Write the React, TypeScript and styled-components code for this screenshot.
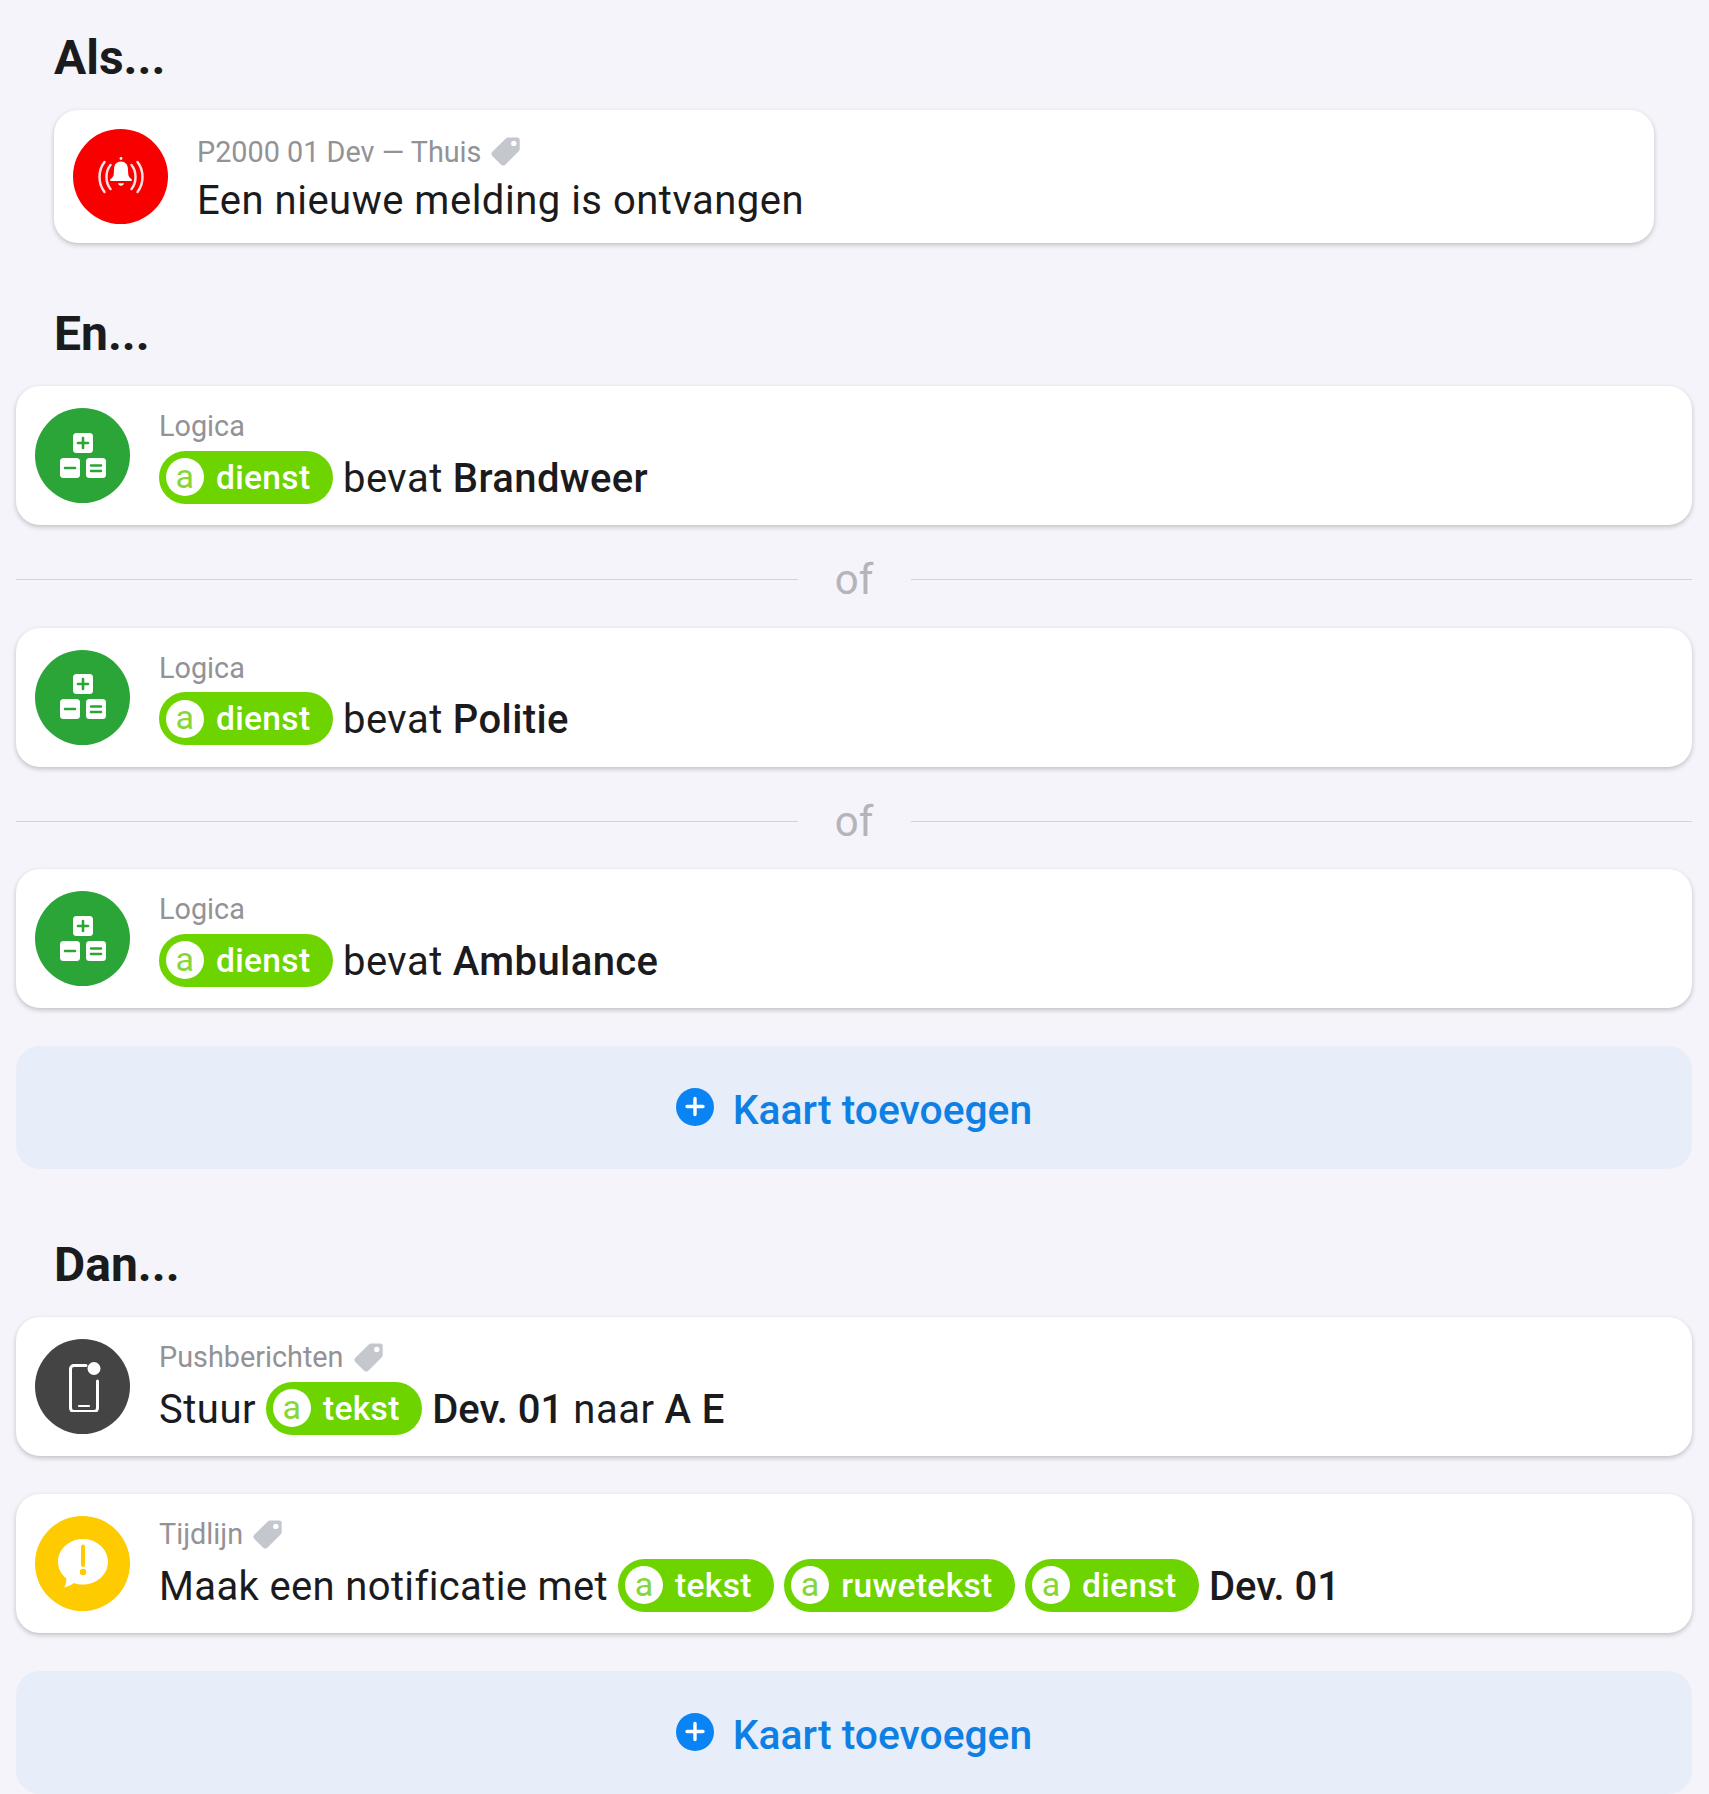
import React from 'react';
import styled, { createGlobalStyle } from 'styled-components';

const GlobalStyle = createGlobalStyle`
  html, body {
    margin: 0;
    padding: 0;
    background: #f4f4fa;
    font-family: Roboto, "Liberation Sans", sans-serif;
    color: #1b1b1d;
  }
  * { box-sizing: border-box; }
`;

const AlarmIcon = () => (
  <svg width="46" height="40" viewBox="0 0 46 40" fill="none">
    <circle cx="23" cy="1.500" r="1.400" fill="#fff" />
    <path d="M23 4.500c-4.300 0-6.700 3.100-6.900 7l-.4 6c-.1 1.900-1.500 3.200-3.300 4.800-.8.700-.3 1.800.7 1.800h19.800c1 0 1.500-1.100.7-1.800-1.800-1.600-3.200-2.900-3.300-4.800l-.4-6c-.2-3.900-2.600-7-6.900-7z" fill="#fff" />
    <path d="M20 26.300h6c-.3 1.500-1.500 2.400-3 2.400s-2.700-.9-3-2.400z" fill="#fff" />
    <path d="M12.500 8c-2.700 3.200-4 7-4 12s1.300 8.800 4 12M6.500 5C3.200 9.300 1.500 14.200 1.500 20s1.700 10.700 5 15" stroke="#fff" strokeWidth="2.500" strokeLinecap="round" opacity="0.88" />
    <path d="M33.500 8c2.700 3.200 4 7 4 12s-1.300 8.800-4 12M39.500 5c3.300 4.300 5 9.200 5 15s-1.700 10.700-5 15" stroke="#fff" strokeWidth="2.500" strokeLinecap="round" opacity="0.88" />
  </svg>
);

const KeysIcon = () => (
  <svg width="46" height="46" viewBox="0 0 46 46">
    <rect x="13" y="0" width="20" height="20" rx="3.500" fill="#fff" />
    <rect x="0" y="25" width="20" height="20" rx="3.500" fill="#fff" />
    <rect x="26" y="25" width="20" height="20" rx="3.500" fill="#fff" />
    <path d="M23 5v10M18 10h10M5 35h10M31 32.500h10M31 38h10" stroke="#2ba537" strokeWidth="2.600" strokeLinecap="round" fill="none" />
  </svg>
);

const PhoneIcon = () => (
  <svg width="36" height="50" viewBox="-4 0 36 50" fill="none">
    <path d="M17 3.500H5C3 3.500 1.500 5 1.500 7v39c0 2 1.500 3.500 3.500 3.500h20c2 0 3.500-1.500 3.500-3.500V19" stroke="#fff" strokeWidth="3" strokeLinecap="round" />
    <path d="M10 44h10" stroke="#fff" strokeWidth="2.200" strokeLinecap="round" />
    <circle cx="25" cy="6.500" r="6.500" fill="#fff" />
  </svg>
);

const BubbleIcon = () => (
  <svg width="50" height="50" viewBox="0 0 50 50">
    <path d="M25 0c13.800 0 25 10.200 25 22.800S38.800 45.600 25 45.600c-3.200 0-6.300-.5-9.100-1.500-2.700 2-6.700 3.900-9.700 4.400 1.400-2.400 2.300-5.700 2.100-9C3.200 35.400 0 29.500 0 22.800 0 10.200 11.200 0 25 0z" fill="#fff" />
    <path d="M25 7.500v18.500" stroke="#fecb00" strokeWidth="4" strokeLinecap="round" />
    <circle cx="25" cy="33" r="3.200" fill="#fecb00" />
  </svg>
);

const TagIcon = () => (
  <svg width="31" height="31" viewBox="0 0 31 31">
    <path d="M18 1.500h9.500c1.200 0 2.200 1 2.200 2.200V13c0 .8-.3 1.600-.9 2.200L15.300 28.700c-1.200 1.200-3 1.200-4.200 0L2.300 19.900c-1.200-1.200-1.200-3 0-4.200L15.800 2.400c.6-.6 1.400-.9 2.200-.9zm5.800 3.200a2.700 2.700 0 1 0 0 5.400 2.700 2.700 0 0 0 0-5.400z" fill="#c5c7cf" fillRule="evenodd" />
  </svg>
);

const PlusIcon = () => (
  <svg width="38" height="38" viewBox="0 0 38 38">
    <circle cx="19" cy="19" r="19" fill="#0a84f5" />
    <path d="M19 10.500v16M11 18.500h16" stroke="#fff" strokeWidth="3.400" strokeLinecap="round" />
  </svg>
);

const Chip: React.FC<{ name: string }> = ({ name }) => (
  <Pill>
    <PillBadge>a</PillBadge>
    {name}
  </Pill>
);

const Meta: React.FC<{ label: string; tagged?: boolean }> = ({ label, tagged }) => (
  <MetaRow>
    {label}
    {tagged && <TagIcon />}
  </MetaRow>
);

const AddCard = () => (
  <AddButton>
    <AddIcon><PlusIcon /></AddIcon>
    <AddLabel>Kaart toevoegen</AddLabel>
  </AddButton>
);

const Or = () => (
  <Separator>
    <SeparatorLine />
    <SeparatorText>of</SeparatorText>
    <SeparatorLine />
  </Separator>
);

const logic = ['Brandweer', 'Politie', 'Ambulance'];

const App: React.FC = () => (
  <Page>
    <GlobalStyle />
    <Heading>Als...</Heading>
    <TriggerWrap>
      <Card $height={133}>
        <IconCircle $color="#f80000"><AlarmIcon /></IconCircle>
        <CardBody $trigger>
          <Meta label="P2000 01 Dev — Thuis" tagged />
          <TextRow>Een nieuwe melding is ontvangen</TextRow>
        </CardBody>
      </Card>
    </TriggerWrap>

    <Heading $top={64}>En...</Heading>
    {logic.map((word, index) => (
      <React.Fragment key={word}>
        {index > 0 && <Or />}
        <Card>
          <IconCircle $color="#2ba537"><KeysIcon /></IconCircle>
          <CardBody>
            <Meta label="Logica" />
            <TextRow>
              <Chip name="dienst" />
              <Word>bevat</Word>
              <Strong>{word}</Strong>
            </TextRow>
          </CardBody>
        </Card>
      </React.Fragment>
    ))}
    <CardGap />
    <AddCard />

    <Heading $top={69}>Dan...</Heading>
    <Card>
      <IconCircle $color="#444444"><PhoneIcon /></IconCircle>
      <CardBody>
        <Meta label="Pushberichten" tagged />
        <TextRow>
          <Word>Stuur</Word>
          <Chip name="tekst" />
          <Strong $tight>Dev. 01</Strong>
          <Word>naar</Word>
          <Strong>A E</Strong>
        </TextRow>
      </CardBody>
    </Card>
    <CardGap />
    <Card>
      <IconCircle $color="#fecb00"><BubbleIcon /></IconCircle>
      <CardBody>
        <Meta label="Tijdlijn" tagged />
        <TextRow>
          <Word $tight>Maak een notificatie met</Word>
          <Chip name="tekst" />
          <Chip name="ruwetekst" />
          <Chip name="dienst" />
          <Strong $tight>Dev. 01</Strong>
        </TextRow>
      </CardBody>
    </Card>
    <CardGap />
    <AddCard />
  </Page>
);

const Page = styled.div`
  width: 1709px;
  height: 1794px;
  overflow: hidden;
  padding: 0 17px 0 16px;
`;

const Heading = styled.h2<{ $top?: number }>`
  margin: ${(p) => p.$top ?? 31}px 0 25px 38px;
  height: 54px;
  line-height: 54px;
  font-size: 48px;
  font-weight: 700;
  color: #1b1b1d;
`;

const TriggerWrap = styled.div`
  padding: 0 38px;
`;

const Card = styled.div<{ $height?: number }>`
  display: flex;
  align-items: center;
  height: ${(p) => p.$height ?? 139}px;
  padding-left: 19px;
  gap: 29px;
  background: #fff;
  border-radius: 24px;
  box-shadow: 0 2px 5px rgba(0, 0, 0, 0.22);
`;

const IconCircle = styled.div<{ $color: string }>`
  flex: none;
  display: flex;
  align-items: center;
  justify-content: center;
  width: 95px;
  height: 95px;
  border-radius: 50%;
  background: ${(p) => p.$color};
`;

const CardBody = styled.div<{ $trigger?: boolean }>`
  display: flex;
  flex-direction: column;
  min-width: 0;
  gap: ${(p) => (p.$trigger ? 2 : 4)}px;
  padding-top: ${(p) => (p.$trigger ? 8 : 1)}px;
`;

const MetaRow = styled.div`
  display: flex;
  align-items: center;
  gap: 9px;
  height: 38px;
  font-size: 28.8px;
  color: #929297;
`;

const TextRow = styled.div`
  display: flex;
  align-items: center;
  gap: 10px;
  height: 56px;
  font-size: 40px;
  letter-spacing: 0.5px;
  color: #1b1b1d;
  white-space: nowrap;
`;

const Word = styled.span<{ $tight?: boolean }>`
  padding-top: 2px;
  letter-spacing: ${(p) => (p.$tight ? 0.36 : 0.5)}px;
`;

const Strong = styled.span<{ $tight?: boolean }>`
  padding-top: 2px;
  font-weight: 500;
  letter-spacing: ${(p) => (p.$tight ? 0 : 0.4)}px;
`;

const Pill = styled.span`
  display: inline-flex;
  align-items: center;
  gap: 12px;
  height: 53px;
  padding: 0 22.5px 0 7px;
  border-radius: 27px;
  background: #6dd400;
  color: #fff;
  font-size: 33.6px;
  font-weight: 500;
  letter-spacing: 0.3px;
`;

const PillBadge = styled.span`
  display: flex;
  align-items: center;
  justify-content: center;
  width: 38px;
  height: 38px;
  padding-bottom: 3px;
  border-radius: 50%;
  background: #fff;
  color: #86d63a;
  font-size: 34px;
  font-weight: 400;
`;

const Separator = styled.div`
  display: flex;
  align-items: center;
  height: 102.5px;
  padding-top: 7px;
`;

const SeparatorLine = styled.div`
  flex: 1;
  height: 1px;
  background: #d3d3d8;
`;

const SeparatorText = styled.span`
  width: 113px;
  text-align: center;
  font-size: 42px;
  color: #b4b4ba;
`;

const CardGap = styled.div`
  height: 38px;
`;

const AddButton = styled.div`
  display: flex;
  align-items: center;
  justify-content: center;
  gap: 19px;
  height: 123px;
  border-radius: 24px;
  background: #e7edf9;
`;

const AddIcon = styled.span`
  display: flex;
  margin-bottom: 1px;
`;

const AddLabel = styled.span`
  padding-top: 5px;
  font-size: 40.8px;
  font-weight: 500;
  color: #0f80e3;
`;

export default App;
